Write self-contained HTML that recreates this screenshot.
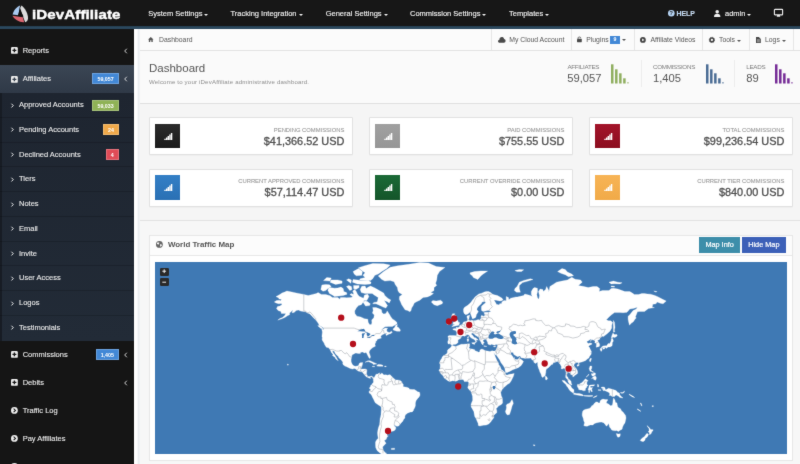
<!DOCTYPE html>
<html lang="en">
<head>
<meta charset="utf-8">
<title>iDevAffiliate - Dashboard</title>
<style>
*{box-sizing:border-box;margin:0;padding:0}
html,body{width:800px;height:464px;overflow:hidden;position:relative;background:#f6f6f6;font-family:"Liberation Sans",sans-serif;color:#555}
.abs,.abs *{position:absolute}
#wrap{position:absolute;left:-6px;top:-6px;width:812px;height:476px;overflow:hidden;will-change:transform;background:#f6f6f6;filter:url(#soft)}
#in{left:6px;top:6px;width:800px;height:464px}
#clip{position:absolute;left:0;top:0;width:800px;height:464px;overflow:hidden}
svg{overflow:visible}
/* top nav */
#top{left:-6px;top:-6px;width:812px;height:32px;background:#171717}
#topline{left:-6px;top:26px;width:812px;height:2.8px;background:linear-gradient(#20384a,#2d4b60 40%,#27445a 80%,#3a5468);z-index:5}
.nav{top:0;height:28px;line-height:28px;color:#f4f4f4;font-size:7.5px;white-space:nowrap;-webkit-text-stroke:0.12px #f4f4f4}
.caret{display:inline-block;position:relative!important;width:0;height:0;border-left:2.1px solid transparent;border-right:2.1px solid transparent;border-top:2.3px solid currentColor;margin-left:2px;vertical-align:-0.3px}
#brand{left:32px;top:0;height:26.5px;line-height:29.4px;font-weight:bold;font-size:13.4px;color:#fff;letter-spacing:0.1px;white-space:nowrap;-webkit-text-stroke:0.45px #fff;transform:scaleX(1.125);transform-origin:0 0}
/* sidebar */
#side{left:-6px;top:28px;width:140px;height:442px;background:#151515}
#sub{left:-6px;top:93px;width:140px;height:247.5px;background:linear-gradient(#1e2530,#222b37);border-left:8.5px solid #171c24}
.mi{left:0;width:134px;height:28px;line-height:28px;color:#ededed;font-size:7.5px;white-space:nowrap;-webkit-text-stroke:0.1px #ededed}
.mi .t{left:22.7px;top:0}
.mi .ic{left:10.6px;top:10.6px;width:6.8px;height:6.8px}
.mi .chev{left:124px;top:11px;width:3.4px;height:6px}
.si{left:0;width:134px;height:24.75px;line-height:24.5px;color:#ededed;font-size:7.5px;white-space:nowrap;-webkit-text-stroke:0.1px #ededed;border-bottom:1px solid rgba(0,0,0,.16)}
.si .t{left:19px;top:0}
.si .chev{left:10.6px;top:9.6px;width:2.8px;height:5.2px}
.badge{-webkit-text-stroke:0;height:11px;line-height:11px;color:#fff;font-size:5.3px;font-weight:bold;text-align:center;right:15.2px;top:8.3px;border:0.5px solid rgba(255,255,255,.22)}
.si .badge{top:6.5px}
/* content */
#edge{left:134px;top:28px;width:6px;height:442px;background:linear-gradient(90deg,#fff 0,#fff 50%,#eaedf1 75%,#f4f5f6 100%);z-index:3}
#crumb{left:136px;top:28px;width:670px;height:22.5px;background:#fbfbfb;border-bottom:1px solid #e2e2e2}
.cb{top:0;height:24px;line-height:24.4px;font-size:6.85px;color:#555;white-space:nowrap}
.sep{top:0;width:1px;height:22px;background:#e6e6e6}
.ci{top:0;left:0}
#head{left:136px;top:50.5px;width:670px;height:53px;background:#fafafa;border-bottom:1px solid #e0e0e0}
.sl{font-size:6.25px;line-height:8px;color:#7c7c7c;white-space:nowrap;top:12.7px;letter-spacing:-0.28px}
.sv{font-size:11.2px;line-height:14px;color:#555;white-space:nowrap;top:20.8px}
.bar{width:2.5px;bottom:19.6px}
.vsep{top:9px;width:1px;height:27px;background:#ededed}
#cards{left:136px;top:103.5px;width:670px;height:117.5px;background:#f5f5f5;border-bottom:1px solid #e2e2e2}
.card{width:204px;height:38px;background:#fff;border:1px solid #e1e1e1;border-radius:1px;box-shadow:0 0.5px 0.5px rgba(0,0,0,.05)}
.card .sq{left:5px;top:5.9px;width:25.3px;height:24.4px}
.card .sq svg{left:8.7px;top:8.9px}
.card .lb{right:7.7px;top:7.6px;font-size:5.85px;line-height:8px;color:#9a9a9a;white-space:nowrap;-webkit-text-stroke:0.1px #9a9a9a}
.card .vl{right:7.7px;top:15.6px;font-size:10.9px;line-height:14px;color:#4e4e4e;white-space:nowrap;-webkit-text-stroke:0.3px #4e4e4e}
#below{left:136px;top:221px;width:670px;height:249px;background:#f7f7f7}
#panel{left:149px;top:235px;width:644px;height:226px;background:#fff;border:1px solid #e7e7e7}
#ptitle{left:0;top:0;width:642px;height:19.5px;border-bottom:1px solid #e8e8e8;background:#fcfcfc}
#map{left:5px;top:25.5px;width:631.5px;height:192.5px;background:#3f79b4;overflow:hidden}
.btn{top:1px;height:16px;line-height:16.8px;color:#fff;font-size:7.3px;text-align:center;white-space:nowrap;-webkit-text-stroke:0.2px #fff}
.zb{left:5.2px;width:8.6px;height:8.2px;background:#2a2a2a;border-radius:1.3px}
.r2 .lb{top:7.4px}.r2 .vl{top:15.4px}
</style>
</head>
<body>
<svg width="0" height="0" style="position:absolute;left:0;top:0"><filter id="soft" x="0" y="0" width="100%" height="100%" color-interpolation-filters="sRGB"><feConvolveMatrix order="3" kernelMatrix="0.015 0.065 0.015 0.065 0.68 0.065 0.015 0.065 0.015" edgeMode="duplicate" preserveAlpha="true"/></filter></svg>
<div id="clip"><div id="wrap" class="abs"><div id="in">
  <div id="top"></div><div id="topline"></div>
  <svg style="left:11.5px;top:5px" width="17" height="18" viewBox="0 0 17 18">
    <path d="M8.2,0.6 C5,1.6 1.6,5.2 0.6,9.6 L6.6,10.2 L7.4,3.2 Z" fill="#a9c9f0"/>
    <path d="M9.4,0.6 C12.8,2.6 16.2,8.6 16,13.6 C15.8,15.6 14.6,17 13.2,17.2 L11,11.4 L8.2,3 Z" fill="#dcdcdc"/>
    <path d="M0.4,10.8 C2.4,14.6 7.6,17.6 12.2,17.2 L10.8,12.2 L5.4,11.6 Z" fill="#d9646f"/>
    <path d="M7.6,4.4 L11.6,11.6 L5.8,11 Z" fill="#0c0c0c"/>
  </svg>
  <div id="brand">iDevAffiliate</div>
  <div class="nav" style="left:148.2px">System Settings<span class="caret"></span></div>
  <div class="nav" style="left:230.5px">Tracking Integration<span class="caret"></span></div>
  <div class="nav" style="left:325.7px">General Settings<span class="caret"></span></div>
  <div class="nav" style="left:410px">Commission Settings<span class="caret"></span></div>
  <div class="nav" style="left:509px">Templates<span class="caret"></span></div>
  <svg style="left:668px;top:10px" width="6.6" height="6.6" viewBox="0 0 10 10"><circle cx="5" cy="5" r="5" fill="#b5d3f3"/><text x="5" y="8.1" font-size="8.4" font-weight="bold" text-anchor="middle" fill="#171717" font-family="Liberation Sans, sans-serif">?</text></svg>
  <div class="nav" style="left:676.5px;color:#b5d3f3;font-weight:bold;font-size:6.9px">HELP</div>
  <svg style="left:714.3px;top:9.6px" width="6.4" height="7" viewBox="0 0 10 11"><circle cx="5" cy="2.8" r="2.8" fill="#f0f0f0"/><path d="M0,11 C0,7.4 1.6,6 5,6 C8.4,6 10,7.4 10,11 Z" fill="#f0f0f0"/></svg>
  <div class="nav" style="left:725px">admin<span class="caret"></span></div>
  <svg style="left:774px;top:9.4px" width="9" height="8" viewBox="0 0 18 16"><rect x="0.8" y="0.8" width="16.4" height="11" rx="1.4" fill="none" stroke="#f0f0f0" stroke-width="2.2"/><path d="M6.4,12 L11.6,12 L12.6,15.6 L5.4,15.6 Z" fill="#f0f0f0"/></svg>

  <div id="side"></div>
  <div id="sub"></div>
  <div class="mi" style="top:36.75px"><svg class="ic" viewBox="0 0 14 14"><rect width="14" height="14" rx="2.4" fill="#ececec"/><path d="M5.6,3 h2.8 v2.6 h2.6 v2.8 h-2.6 v2.6 h-2.8 v-2.6 h-2.6 v-2.8 h2.6 Z" fill="#151515"/></svg><span class="t">Reports</span><svg class="chev" viewBox="0 0 6 10"><path d="M5,1 L1.2,5 L5,9" fill="none" stroke="#f0f0f0" stroke-width="1.5"/></svg></div>
  <div style="left:-6px;top:65px;width:140px;height:28px;background:linear-gradient(#3b4654,#2f3947)"></div>
  <div class="mi" style="top:65px;height:28px"><svg class="ic" viewBox="0 0 14 14"><rect width="14" height="14" rx="2.4" fill="#ececec"/><path d="M5.6,3 h2.8 v2.6 h2.6 v2.8 h-2.6 v2.6 h-2.8 v-2.6 h-2.6 v-2.8 h2.6 Z" fill="#343f4c"/></svg><span class="t">Affiliates</span><span class="badge" style="width:26.5px;background:#4288d6">59,057</span><svg class="chev" viewBox="0 0 6 10"><path d="M5,1 L1.2,5 L5,9" fill="none" stroke="#f0f0f0" stroke-width="1.5"/></svg></div>
  <div class="si" style="top:93.00px"><svg class="chev" viewBox="0 0 6 10"><path d="M1,1 L4.8,5 L1,9" fill="none" stroke="#ffffff" stroke-width="2"/></svg><span class="t">Approved Accounts</span><span class="badge" style="width:26.5px;background:#8fb256">59,033</span></div>
  <div class="si" style="top:117.75px"><svg class="chev" viewBox="0 0 6 10"><path d="M1,1 L4.8,5 L1,9" fill="none" stroke="#ffffff" stroke-width="2"/></svg><span class="t">Pending Accounts</span><span class="badge" style="width:15.5px;background:#f0a94a">24</span></div>
  <div class="si" style="top:142.50px"><svg class="chev" viewBox="0 0 6 10"><path d="M1,1 L4.8,5 L1,9" fill="none" stroke="#ffffff" stroke-width="2"/></svg><span class="t">Declined Accounts</span><span class="badge" style="width:13px;background:#df4b57">4</span></div>
  <div class="si" style="top:167.25px"><svg class="chev" viewBox="0 0 6 10"><path d="M1,1 L4.8,5 L1,9" fill="none" stroke="#ffffff" stroke-width="2"/></svg><span class="t">Tiers</span></div>
  <div class="si" style="top:192.00px"><svg class="chev" viewBox="0 0 6 10"><path d="M1,1 L4.8,5 L1,9" fill="none" stroke="#ffffff" stroke-width="2"/></svg><span class="t">Notes</span></div>
  <div class="si" style="top:216.75px"><svg class="chev" viewBox="0 0 6 10"><path d="M1,1 L4.8,5 L1,9" fill="none" stroke="#ffffff" stroke-width="2"/></svg><span class="t">Email</span></div>
  <div class="si" style="top:241.50px"><svg class="chev" viewBox="0 0 6 10"><path d="M1,1 L4.8,5 L1,9" fill="none" stroke="#ffffff" stroke-width="2"/></svg><span class="t">Invite</span></div>
  <div class="si" style="top:266.25px"><svg class="chev" viewBox="0 0 6 10"><path d="M1,1 L4.8,5 L1,9" fill="none" stroke="#ffffff" stroke-width="2"/></svg><span class="t">User Access</span></div>
  <div class="si" style="top:291.00px"><svg class="chev" viewBox="0 0 6 10"><path d="M1,1 L4.8,5 L1,9" fill="none" stroke="#ffffff" stroke-width="2"/></svg><span class="t">Logos</span></div>
  <div class="si" style="top:315.75px;border-bottom:0"><svg class="chev" viewBox="0 0 6 10"><path d="M1,1 L4.8,5 L1,9" fill="none" stroke="#ffffff" stroke-width="2"/></svg><span class="t">Testimonials</span></div>
  
  <div class="mi" style="top:340.5px"><svg class="ic" viewBox="0 0 14 14"><rect width="14" height="14" rx="2.4" fill="#ececec"/><path d="M5.6,3 h2.8 v2.6 h2.6 v2.8 h-2.6 v2.6 h-2.8 v-2.6 h-2.6 v-2.8 h2.6 Z" fill="#151515"/></svg><span class="t">Commissions</span><span class="badge" style="width:23px;background:#4288d6">1,405</span><svg class="chev" viewBox="0 0 6 10"><path d="M5,1 L1.2,5 L5,9" fill="none" stroke="#f0f0f0" stroke-width="1.5"/></svg></div>
  <div class="mi" style="top:368.5px"><svg class="ic" viewBox="0 0 14 14"><rect width="14" height="14" rx="2.4" fill="#ececec"/><path d="M5.6,3 h2.8 v2.6 h2.6 v2.8 h-2.6 v2.6 h-2.8 v-2.6 h-2.6 v-2.8 h2.6 Z" fill="#151515"/></svg><span class="t">Debits</span><svg class="chev" viewBox="0 0 6 10"><path d="M5,1 L1.2,5 L5,9" fill="none" stroke="#f0f0f0" stroke-width="1.5"/></svg></div>
  <div class="mi" style="top:396.5px"><svg class="ic" viewBox="0 0 14 14"><circle cx="7" cy="7" r="7" fill="#ececec"/><path d="M5.4,3.4 L9.2,7 L5.4,10.6" fill="none" stroke="#151515" stroke-width="2.2"/></svg><span class="t">Traffic Log</span></div>
  <div class="mi" style="top:424.5px"><svg class="ic" viewBox="0 0 14 14"><circle cx="7" cy="7" r="7" fill="#ececec"/><path d="M5.4,3.4 L9.2,7 L5.4,10.6" fill="none" stroke="#151515" stroke-width="2.2"/></svg><span class="t">Pay Affiliates</span></div>
  <div class="mi" style="top:452.5px"><svg class="ic" viewBox="0 0 14 14"><circle cx="7" cy="7" r="7" fill="#ececec"/><path d="M5.4,3.4 L9.2,7 L5.4,10.6" fill="none" stroke="#151515" stroke-width="2.2"/></svg></div>

  <div id="edge"></div>
  <div id="crumb">
    <svg class="ci" style="left:12.2px;top:9px" width="5.6" height="5" viewBox="0 0 11 10"><path d="M5.5,0 L11,5 L9.4,5 L9.4,10 L6.6,10 L6.6,6.4 L4.4,6.4 L4.4,10 L1.6,10 L1.6,5 L0,5 Z" fill="#555"/></svg>
    <span class="cb" style="left:23px">Dashboard</span>
    <span class="sep" style="left:355.2px"></span>
    <svg class="ci" style="left:361.5px;top:8.8px" width="7.6" height="5.8" viewBox="0 0 15 11"><path d="M3.4,11 C1.4,11 0,9.8 0,8 C0,6.4 1.2,5.2 2.8,5 C2.8,2.2 4.8,0 7.6,0 C9.8,0 11.4,1.4 12,3.6 C13.8,3.8 15,5.2 15,7.2 C15,9.4 13.6,11 11.6,11 Z" fill="#4a4a4a"/></svg>
    <span class="cb" style="left:373.2px">My Cloud Account</span>
    <span class="sep" style="left:434.7px"></span>
    <svg class="ci" style="left:441.2px;top:8.4px" width="4.8" height="6.2" viewBox="0 0 10 13"><rect x="0" y="6" width="10" height="7" rx="1" fill="#4a4a4a"/><path d="M2.2,6 V3.8 C2.2,1.6 7.8,1.6 7.8,3.8 V4.6" fill="none" stroke="#4a4a4a" stroke-width="1.8"/></svg>
    <span class="cb" style="left:450.2px">Plugins</span>
    <span class="cb" style="left:474px;top:8.4px;width:10px;height:7.6px;line-height:7.6px;background:#4288d6;color:#fff;font-size:5.2px;text-align:center;font-weight:bold">9</span>
    <span class="cb caret" style="position:absolute!important;left:486px;top:11.4px;height:0;margin:0"></span>
    <span class="sep" style="left:497.7px"></span>
    <svg class="ci" style="left:504px;top:9px" width="5.8" height="5.8" viewBox="0 0 12 12"><circle cx="6" cy="6" r="6" fill="#444"/><path d="M4.4,3 L9.2,6 L4.4,9 Z" fill="#fbfbfb"/></svg>
    <span class="cb" style="left:514.5px">Affiliate Videos</span>
    <span class="sep" style="left:566px"></span>
    <svg class="ci" style="left:572.6px;top:9px" width="5.8" height="5.8" viewBox="0 0 12 12"><circle cx="6" cy="6" r="3.9" fill="none" stroke="#444" stroke-width="3.2"/><circle cx="6" cy="6" r="5.4" fill="none" stroke="#444" stroke-width="1.6" stroke-dasharray="2.1 2.14"/></svg>
    <span class="cb" style="left:583px">Tools<span class="caret"></span></span>
    <span class="sep" style="left:613.2px"></span>
    <svg class="ci" style="left:619.6px;top:9px" width="4.8" height="6" viewBox="0 0 10 12"><path d="M0,0 H6 L10,4 V12 H0 Z" fill="#4a4a4a"/><path d="M2,5.4 H8 M2,7.6 H8 M2,9.8 H8" stroke="#fbfbfb" stroke-width="0.9"/></svg>
    <span class="cb" style="left:629px">Logs<span class="caret"></span></span>
    <span class="sep" style="left:656.5px"></span>
  </div>
  <div id="head">
    <div style="left:13px;top:9.5px;font-size:11.5px;line-height:16px;color:#555;white-space:nowrap">Dashboard</div>
    <div style="left:13px;top:27.6px;font-size:6.1px;line-height:8px;color:#8c8c8c;white-space:nowrap;letter-spacing:0.17px">Welcome to your iDevAffiliate administrative dashboard.</div>
    <div class="sl" style="left:431.4px">AFFILIATES</div>
    <div class="sv" style="left:431.2px">59,057</div>
    <svg style="left:475.1px;top:13px" width="20" height="20" viewBox="0 0 20 20"><rect x="0.00" y="0.3" width="2.5" height="19.2" fill="#8fae5f"/><rect x="4.05" y="5.3" width="2.5" height="14.2" fill="#8fae5f"/><rect x="8.10" y="9.3" width="2.5" height="10.2" fill="#8fae5f"/><rect x="12.15" y="14.3" width="2.5" height="5.2" fill="#8fae5f"/><rect x="16.20" y="18.1" width="1.5" height="1.4" fill="#8fae5f" fill-opacity=".75"/></svg>
    <svg style="left:569.7px;top:13px" width="20" height="20" viewBox="0 0 20 20"><rect x="0.00" y="0.3" width="2.5" height="19.2" fill="#4a6c94"/><rect x="4.05" y="5.3" width="2.5" height="14.2" fill="#4a6c94"/><rect x="8.10" y="9.3" width="2.5" height="10.2" fill="#4a6c94"/><rect x="12.15" y="14.3" width="2.5" height="5.2" fill="#4a6c94"/><rect x="16.20" y="18.1" width="1.5" height="1.4" fill="#4a6c94" fill-opacity=".75"/></svg>
    <svg style="left:638.5px;top:13px" width="20" height="20" viewBox="0 0 20 20"><rect x="0.00" y="0.3" width="2.5" height="19.2" fill="#752b96"/><rect x="4.05" y="5.3" width="2.5" height="14.2" fill="#752b96"/><rect x="8.10" y="9.3" width="2.5" height="10.2" fill="#752b96"/><rect x="12.15" y="14.3" width="2.5" height="5.2" fill="#752b96"/><rect x="16.20" y="18.1" width="1.5" height="1.4" fill="#752b96" fill-opacity=".75"/></svg>
    
    <div class="vsep" style="left:505.2px"></div>
    <div class="sl" style="left:517px">COMMISSIONS</div>
    <div class="sv" style="left:517px">1,405</div>
    <div class="vsep" style="left:598.4px"></div>
    <div class="sl" style="left:610.2px">LEADS</div>
    <div class="sv" style="left:610.2px">89</div>
  </div>
  <div id="cards">
    <div class="card" style="left:13.0px;top:13.6px"><div class="sq" style="background:linear-gradient(#2b2b2b,#1a1a1a)"><svg width="8.6" height="7" viewBox="0 0 16 14"><path d="M0,14 V11.4 H2.8 V14 Z M3.3,14 V8.8 H6.1 V14 Z M6.6,14 V6 H9.4 V14 Z M9.9,14 V3.2 H12.7 V14 Z M13.2,14 V0 H16 V14 Z" fill="#fff"/></svg></div><div class="lb">PENDING COMMISSIONS</div><div class="vl">$41,366.52 USD</div></div>
    <div class="card" style="left:233.0px;top:13.6px"><div class="sq" style="background:linear-gradient(#a0a0a0,#969696)"><svg width="8.6" height="7" viewBox="0 0 16 14"><path d="M0,14 V11.4 H2.8 V14 Z M3.3,14 V8.8 H6.1 V14 Z M6.6,14 V6 H9.4 V14 Z M9.9,14 V3.2 H12.7 V14 Z M13.2,14 V0 H16 V14 Z" fill="#fff"/></svg></div><div class="lb">PAID COMMISSIONS</div><div class="vl">$755.55 USD</div></div>
    <div class="card" style="left:453.0px;top:13.6px"><div class="sq" style="background:linear-gradient(#a3142a,#8c0d1f)"><svg width="8.6" height="7" viewBox="0 0 16 14"><path d="M0,14 V11.4 H2.8 V14 Z M3.3,14 V8.8 H6.1 V14 Z M6.6,14 V6 H9.4 V14 Z M9.9,14 V3.2 H12.7 V14 Z M13.2,14 V0 H16 V14 Z" fill="#fff"/></svg></div><div class="lb">TOTAL COMMISSIONS</div><div class="vl">$99,236.54 USD</div></div>
    <div class="card r2" style="left:13.0px;top:65.6px"><div class="sq" style="background:linear-gradient(#337fc6,#2a70b4);top:4.9px;height:25px"><svg width="8.6" height="7" viewBox="0 0 16 14"><path d="M0,14 V11.4 H2.8 V14 Z M3.3,14 V8.8 H6.1 V14 Z M6.6,14 V6 H9.4 V14 Z M9.9,14 V3.2 H12.7 V14 Z M13.2,14 V0 H16 V14 Z" fill="#fff"/></svg></div><div class="lb">CURRENT APPROVED COMMISSIONS</div><div class="vl">$57,114.47 USD</div></div>
    <div class="card r2" style="left:233.0px;top:65.6px"><div class="sq" style="background:linear-gradient(#1b6a36,#14552a);top:4.9px;height:25px"><svg width="8.6" height="7" viewBox="0 0 16 14"><path d="M0,14 V11.4 H2.8 V14 Z M3.3,14 V8.8 H6.1 V14 Z M6.6,14 V6 H9.4 V14 Z M9.9,14 V3.2 H12.7 V14 Z M13.2,14 V0 H16 V14 Z" fill="#fff"/></svg></div><div class="lb">CURRENT OVERRIDE COMMISSIONS</div><div class="vl">$0.00 USD</div></div>
    <div class="card r2" style="left:453.0px;top:65.6px"><div class="sq" style="background:linear-gradient(#f7b456,#f1aa48);top:4.9px;height:25px"><svg width="8.6" height="7" viewBox="0 0 16 14"><path d="M0,14 V11.4 H2.8 V14 Z M3.3,14 V8.8 H6.1 V14 Z M6.6,14 V6 H9.4 V14 Z M9.9,14 V3.2 H12.7 V14 Z M13.2,14 V0 H16 V14 Z" fill="#fff"/></svg></div><div class="lb">CURRENT TIER COMMISSIONS</div><div class="vl">$840.00 USD</div></div>
    
  </div>
  <div id="below"></div>
  <div id="panel">
    <div id="ptitle">
      <svg style="left:6.1px;top:5.4px" width="6.8" height="6.8" viewBox="0 0 14 14"><circle cx="7" cy="7" r="7" fill="#666"/><path d="M2.2,3.4 C4,2.6 5.6,3.6 6.6,3 C7.4,4.6 5.4,5.6 5.8,7 C4.6,7.6 3.4,6.6 2,6.4 Z M8.6,6.8 C10,6.2 11.8,7 12.4,8.2 C11.8,9.8 10.6,11.4 9,11.8 C8.8,10.2 7.8,8.4 8.6,6.8 Z" fill="#fcfcfc"/></svg>
      <div style="left:17.9px;top:-1px;line-height:19.4px;font-size:7.95px;font-weight:bold;color:#555;white-space:nowrap">World Traffic Map</div>
      <div class="btn" style="left:549.1px;width:41px;background:#3d8eaa">Map Info</div>
      <div class="btn" style="left:592.1px;width:43.5px;background:#3c60b8">Hide Map</div>
    </div>
    <div id="map"><svg width="631.5" height="192.5" viewBox="0 0 631.5 192.5" style="left:0;top:0"><path d="M131.9,29.0L136.8,30.0L141.2,31.0L148.8,32.4L153.2,33.5L155.4,33.0L157.6,32.4L161.4,31.6L163.1,30.6L166.3,32.4L170.7,32.4L175.1,33.7L177.3,35.6L182.7,35.6L184.9,37.3L185.5,35.4L189.3,35.4L191.5,35.8L195.9,35.6L197.5,34.9L198.6,31.6L197.7,29.0L199.7,27.6L201.3,29.6L202.4,32.0L204.1,34.3L206.8,35.4L208.5,36.2L209.5,33.0L212.8,32.2L213.9,34.5L212.8,36.8L211.7,38.6L209.0,38.4L207.9,40.4L206.3,42.7L203.5,43.6L201.3,46.1L199.7,48.9L199.9,51.5L201.9,54.2L205.7,54.9L209.5,56.7L212.8,57.2L213.2,60.3L214.5,62.4L216.1,62.7L216.9,61.1L216.7,58.1L218.8,55.8L219.3,53.0L217.4,51.1L218.2,48.6L217.7,45.6L221.0,45.6L223.8,46.6L226.5,47.8L226.9,50.6L228.7,52.0L230.9,51.4L232.2,48.9L234.2,51.9L235.8,54.7L237.4,56.9L239.8,58.4L241.8,60.3L242.0,61.8L240.5,62.7L237.4,64.4L233.1,64.4L230.0,64.8L228.1,66.2L226.0,68.6L227.6,67.5L230.3,66.1L232.6,66.2L231.6,67.9L232.4,69.9L234.7,70.5L236.3,69.3L237.4,70.1L236.1,71.4L233.6,72.3L231.4,73.5L230.7,72.6L232.2,71.2L229.8,71.6L227.8,72.6L226.3,73.5L225.6,75.0L226.5,75.9L224.9,76.4L222.3,77.3L222.0,78.6L220.7,79.4L220.8,80.5L219.9,82.0L220.4,84.2L218.8,85.0L217.1,86.0L215.6,87.6L214.4,88.9L214.1,90.6L214.9,92.8L215.5,94.7L215.1,96.3L214.2,96.2L213.4,94.7L212.5,93.0L211.6,91.0L210.7,90.6L209.4,90.9L207.7,90.1L205.7,90.3L205.3,91.6L203.3,91.5L200.8,91.0L199.2,91.7L197.0,93.1L196.5,95.4L196.1,97.7L196.2,100.0L197.4,102.6L198.8,103.8L200.2,104.3L202.4,103.9L203.7,103.2L204.2,101.5L205.2,100.8L207.7,100.6L207.5,102.3L207.0,104.1L206.5,105.1L205.8,106.9L207.4,107.0L209.0,106.9L211.0,107.0L212.0,107.9L211.7,110.1L211.5,111.8L212.2,113.5L213.4,114.6L215.0,114.6L216.3,114.0L218.1,114.9L219.0,115.7L220.3,113.7L220.6,112.8L221.2,112.3L222.7,112.0L224.3,111.0L225.1,110.9L224.4,112.0L225.0,112.6L226.3,111.8L226.6,111.0L228.1,112.0L228.6,112.9L230.9,112.8L232.5,113.2L234.2,112.7L235.2,112.8L236.3,114.0L237.4,115.1L239.1,116.8L240.7,117.9L242.9,118.0L245.1,118.4L246.5,119.6L247.3,121.2L248.4,122.7L248.0,124.4L250.0,125.1L251.7,125.2L253.8,126.1L254.6,127.3L257.1,127.5L259.3,127.5L261.0,128.5L262.6,129.7L264.5,130.2L265.0,132.3L264.8,133.8L263.9,135.2L262.5,136.7L261.0,138.7L260.4,141.0L260.4,143.8L259.6,146.0L258.8,147.3L258.2,148.9L257.1,149.9L255.5,150.0L254.2,150.4L252.4,151.2L250.6,152.7L249.9,154.1L249.9,156.1L248.6,157.5L247.8,159.2L246.1,160.9L244.7,162.7L244.0,163.7L242.9,164.2L241.6,164.2L240.2,163.6L239.2,163.1L239.2,164.0L240.5,164.8L240.9,166.1L240.1,168.1L238.5,169.0L236.3,169.4L235.0,169.2L234.9,171.4L233.9,172.1L232.0,171.8L232.0,173.5L233.4,173.9L232.5,174.6L231.6,175.9L231.3,177.3L229.3,178.6L230.2,180.0L231.1,181.2L229.2,183.2L227.6,184.9L228.1,187.5L228.4,188.6L230.3,190.7L231.7,191.3L229.5,192.6L226.5,192.0L224.3,190.4L222.1,188.6L220.7,185.6L220.5,182.8L220.5,180.0L221.6,177.9L223.2,176.2L222.7,173.3L222.5,170.7L223.0,167.5L223.5,165.6L224.6,162.5L224.9,159.5L225.0,157.1L225.6,154.7L226.0,152.4L226.1,150.6L226.3,147.7L226.2,144.9L225.1,143.9L223.8,143.2L222.1,142.1L220.5,141.0L219.6,139.6L218.7,137.6L217.7,135.7L216.7,133.4L215.7,131.9L214.2,131.0L214.1,129.4L215.2,128.2L215.7,127.3L214.5,126.8L214.7,125.5L215.6,124.3L215.6,123.5L216.7,122.8L217.2,121.7L218.3,120.6L218.5,119.5L218.3,118.4L218.4,117.0L217.9,116.6L217.2,115.3L216.1,114.7L215.1,115.5L215.6,116.4L213.9,116.0L212.3,115.3L211.5,115.0L210.1,113.5L209.2,112.5L207.9,110.7L207.1,109.9L205.2,109.6L203.0,109.0L201.9,108.1L200.2,106.7L199.2,106.6L197.5,107.1L195.3,106.5L193.7,105.7L191.7,104.7L189.9,104.1L188.2,102.8L187.7,101.7L187.9,100.6L187.1,99.1L185.5,97.3L183.8,95.7L183.3,94.5L182.2,93.6L181.1,92.4L180.0,90.9L179.5,89.4L177.6,88.6L177.6,90.0L179.5,92.4L180.6,94.2L181.7,95.9L182.4,97.5L183.3,98.6L182.4,98.3L180.6,96.8L180.2,95.4L178.4,94.2L177.3,93.2L178.2,92.4L176.7,91.0L175.6,88.8L175.0,87.6L173.6,85.8L171.3,85.2L169.7,82.7L169.1,81.0L167.7,78.9L167.1,77.7L167.3,75.6L166.9,74.3L167.4,70.0L166.7,66.9L169.1,67.5L168.5,66.1L166.9,64.7L164.2,63.2L163.1,61.1L160.9,58.1L159.2,56.6L157.0,54.2L154.9,51.9L152.7,51.1L150.5,49.8L148.3,49.4L145.6,49.1L143.4,48.1L141.2,48.6L139.0,50.6L137.0,50.7L137.9,47.8L136.3,49.4L134.6,51.1L134.6,52.7L132.4,53.8L130.2,55.3L127.5,56.6L125.3,57.3L122.8,58.1L124.8,56.6L127.5,55.5L129.7,53.4L130.8,51.5L129.2,51.4L126.4,51.5L125.9,49.4L123.1,48.6L121.5,46.5L122.6,44.4L124.8,44.1L127.0,42.7L126.4,41.5L123.7,41.8L121.0,40.9L119.3,39.9L121.5,38.6L124.2,38.2L125.9,38.8L126.4,37.3L124.2,36.9L123.1,35.4L121.0,34.7L122.6,33.7L124.8,32.6L127.0,31.0L129.7,30.0ZM223.2,14.0L228.7,9.6L235.2,5.3L242.9,3.7L253.8,2.3L264.8,0.4L273.5,1.0L281.2,4.5L289.9,5.5L284.5,9.6L282.3,13.3L281.7,17.9L280.6,21.3L281.7,23.4L279.0,25.6L279.0,28.6L275.7,30.6L278.5,31.4L275.7,33.5L272.4,34.9L268.1,35.4L264.8,38.2L262.0,39.5L259.3,40.9L258.2,43.6L256.6,46.1L256.0,48.6L254.9,49.8L252.7,48.6L250.0,47.8L248.4,45.3L246.7,42.7L245.6,40.0L244.3,37.3L244.5,34.5L247.3,32.6L244.0,30.6L242.9,28.6L242.4,25.6L240.2,22.4L239.1,19.7L235.2,18.6L229.8,19.1L226.5,17.3L224.9,15.6ZM215.6,24.1L219.9,26.0L224.3,28.6L228.7,31.0L229.8,33.5L233.1,36.4L235.8,37.9L234.2,40.9L232.0,39.5L229.2,38.6L232.5,43.6L230.9,46.1L228.1,45.1L224.9,43.4L221.0,41.8L217.7,41.8L218.8,40.4L222.1,40.0L222.7,38.2L223.2,35.4L219.9,33.5L217.2,31.6L213.4,31.6L210.1,31.6L206.3,30.6L205.2,27.6L206.8,24.3L210.1,24.1L211.2,26.6L213.4,25.1ZM172.9,28.6L174.5,31.6L177.3,33.0L179.5,34.5L183.8,34.1L188.2,33.5L192.0,32.2L191.5,30.6L188.8,29.6L188.2,26.6L186.0,25.1L182.7,26.0L179.5,26.2L175.1,25.6L173.5,26.6ZM165.8,27.6L168.0,29.2L170.7,28.6L172.9,26.6L176.2,24.5L174.5,22.8L170.7,22.4L166.9,23.0L166.3,25.6ZM204.6,17.9L215.6,18.6L217.7,16.8L219.9,13.3L223.2,12.1L227.6,8.9L232.0,6.3L235.2,3.1L228.7,1.8L217.7,1.5L209.0,3.9L203.5,5.8L206.8,8.4L210.1,10.8L207.9,13.3L210.1,15.6L205.2,16.8ZM198.1,9.6L203.5,6.6L207.4,9.6L206.8,13.3L201.3,13.8L199.2,12.1ZM197.5,20.2L202.4,21.9L210.1,22.4L215.6,21.9L216.1,20.2L213.4,18.6L205.7,18.6L202.4,17.9L198.1,17.5ZM207.9,40.0L210.6,44.1L214.5,43.6L215.3,41.8L212.3,39.5L210.1,39.1ZM175.1,20.2L180.6,22.4L187.1,21.3L187.1,19.1L182.7,17.9L176.2,17.9ZM191.5,24.5L194.8,28.6L197.0,27.6L196.4,24.5L193.7,23.4ZM198.6,23.4L198.6,26.6L200.8,27.6L204.1,25.6L204.1,23.4ZM194.8,32.6L197.5,34.5L198.6,32.6L196.4,31.6ZM191.5,17.9L195.9,21.3L196.4,17.9L193.7,16.8ZM168.5,18.6L175.1,19.1L176.2,16.1L171.8,15.6ZM238.2,67.9L241.8,69.2L245.1,69.3L245.4,68.1L244.5,66.8L243.5,65.4L242.0,64.7L242.4,62.5L240.7,63.2L239.6,65.4L238.2,66.8ZM162.7,63.7L165.8,66.4L168.1,66.9L166.6,65.0L164.2,63.5ZM210.1,100.2L212.8,98.8L215.0,98.7L218.8,100.4L221.9,102.0L218.3,102.4L217.7,101.5L215.0,100.2L213.4,99.6L211.2,100.1ZM221.7,104.0L224.3,104.3L228.1,104.2L227.6,103.1L224.9,102.4L222.8,102.5ZM217.4,104.2L219.6,104.3L219.6,104.8L217.4,104.7ZM229.6,104.0L231.2,104.1L231.2,104.7L229.6,104.7ZM276.3,40.0L279.0,42.7L282.3,43.7L287.2,41.8L287.7,40.0L285.6,38.2L281.2,39.1L277.9,38.6ZM236.3,186.4L239.6,186.2L239.6,187.4L236.3,187.4ZM297.2,83.2L296.2,82.7L295.0,81.8L293.2,82.0L292.7,79.9L293.4,78.0L293.5,76.7L292.9,74.3L294.3,73.4L296.8,73.5L298.9,73.6L301.1,73.8L301.7,72.2L301.7,70.3L300.7,68.6L298.1,67.8L297.8,66.9L299.8,66.4L301.3,66.7L301.0,65.1L301.7,65.5L303.3,65.4L304.7,64.5L304.8,63.4L306.7,62.7L307.8,61.5L308.3,60.3L309.6,59.7L310.7,59.6L312.1,59.1L312.6,58.1L312.5,56.6L311.9,55.0L312.0,54.1L314.7,53.1L314.3,55.0L314.0,56.6L313.8,57.6L314.2,58.2L315.1,58.8L316.7,58.2L318.4,58.8L320.6,58.4L323.3,57.6L324.4,58.2L324.9,57.5L326.0,56.6L326.0,54.5L326.7,53.3L328.2,54.2L329.6,53.9L329.8,52.2L328.8,50.7L330.4,50.3L333.7,50.3L336.1,49.4L334.2,48.6L332.6,48.6L330.4,49.1L328.2,49.6L326.6,48.6L326.4,47.0L326.4,44.4L327.7,43.0L330.4,40.9L330.7,40.0L329.3,39.5L327.1,40.0L326.3,41.8L323.8,44.1L322.2,46.1L321.9,47.8L323.3,49.4L322.8,50.6L321.3,52.7L321.1,54.2L320.6,55.5L318.7,56.6L317.3,56.7L317.0,55.5L316.2,53.4L315.3,51.1L314.7,50.3L312.9,51.9L310.7,52.7L309.1,51.4L308.5,49.4L308.5,47.0L309.6,45.3L312.4,43.6L314.5,41.8L316.2,40.0L317.3,38.2L318.9,36.4L320.0,34.9L322.2,33.2L323.8,32.0L326.6,31.2L329.3,30.0L331.3,29.4L333.7,29.6L336.4,31.0L337.0,32.0L339.2,32.8L342.4,33.5L346.8,36.0L348.1,37.7L346.8,38.8L344.6,38.9L341.3,38.2L339.2,37.9L338.6,37.3L340.8,40.9L341.3,42.2L344.1,42.9L344.6,41.8L346.8,41.6L346.8,40.0L349.0,38.6L351.2,38.8L351.2,36.4L351.2,34.5L353.4,35.4L353.9,37.7L355.6,36.2L361.0,34.9L362.1,35.1L365.4,34.3L368.7,33.5L369.8,32.0L373.6,33.0L375.3,33.5L377.4,34.5L376.3,32.6L376.3,29.6L378.0,26.6L379.6,25.6L382.4,26.2L382.6,29.6L381.8,32.6L382.4,35.4L383.5,37.3L381.8,38.8L384.0,36.4L384.5,33.5L383.5,29.6L385.1,27.0L387.8,27.6L388.4,29.6L390.6,27.6L391.7,24.5L393.8,28.6L393.8,30.6L394.9,24.5L398.2,22.4L401.5,20.2L407.0,19.1L412.4,17.9L416.8,15.2L420.1,17.3L425.6,17.9L427.2,20.2L423.4,23.4L426.1,24.1L427.8,24.3L433.2,25.6L438.1,24.5L442.0,24.5L444.7,26.6L444.2,29.6L447.4,28.6L450.7,28.6L454.0,28.6L456.2,26.6L458.4,26.2L462.8,27.0L467.1,28.6L469.9,29.6L474.8,29.6L478.1,31.6L479.2,32.6L483.5,32.6L486.8,31.6L489.5,31.6L492.3,32.0L495.6,32.2L499.9,33.5L503.2,34.9L507.6,37.3L511.2,39.1L508.1,41.8L505.4,41.3L502.1,40.0L501.0,41.8L497.8,42.2L497.2,45.3L499.4,45.6L493.4,46.6L489.5,49.4L484.6,49.4L482.4,49.8L481.3,52.7L480.3,55.0L481.3,55.8L480.0,57.3L478.1,60.0L476.4,61.1L474.5,63.2L473.7,60.3L473.1,57.3L473.1,54.2L474.8,52.7L478.1,48.6L481.3,47.0L482.4,45.3L478.1,46.6L474.8,47.0L472.0,50.3L468.2,50.7L464.9,50.6L459.5,50.6L456.2,53.0L454.0,55.0L451.3,57.8L453.5,58.8L455.6,58.8L457.6,60.3L456.7,63.2L456.7,66.1L455.1,68.9L452.4,71.6L448.5,74.6L447.3,74.2L446.0,75.2L444.9,76.3L444.7,77.3L442.5,78.5L443.4,80.0L444.6,82.0L444.6,83.9L444.2,84.4L442.5,84.9L441.2,85.2L441.4,83.3L441.5,81.4L439.8,80.8L440.1,78.9L439.0,78.2L436.5,77.6L435.6,79.6L436.0,77.4L435.4,77.2L433.8,78.5L432.1,79.2L431.8,80.1L433.2,81.4L435.1,81.0L437.0,81.5L436.8,82.3L434.6,83.3L433.5,84.5L434.5,85.5L435.4,87.6L436.3,89.2L436.5,90.6L435.2,90.3L436.3,91.2L436.0,92.6L434.6,94.2L433.9,95.9L432.3,97.1L430.7,98.5L428.3,99.4L426.7,100.0L424.5,100.6L423.7,101.9L423.2,100.6L421.5,100.4L419.8,101.5L418.8,103.1L419.5,104.8L421.4,106.8L422.5,109.0L422.7,111.3L420.6,112.9L419.9,113.1L419.5,114.0L417.8,115.0L417.9,113.5L417.1,112.9L415.7,112.4L415.2,111.0L413.5,110.4L413.3,109.6L412.4,109.8L412.3,111.3L411.7,112.9L411.7,114.2L412.8,115.1L413.3,116.8L414.6,117.7L416.0,119.2L416.3,121.2L417.0,122.9L416.3,123.0L414.1,121.5L413.0,119.5L412.8,117.9L412.1,117.1L410.8,115.7L410.6,114.0L410.9,112.4L411.0,110.1L410.3,108.5L409.9,106.6L408.6,106.2L407.3,107.0L406.2,106.8L406.4,104.5L405.3,102.5L404.0,101.1L403.5,99.6L402.0,99.4L400.4,100.2L398.2,100.8L397.7,102.3L396.3,102.8L394.9,104.2L393.1,105.9L391.4,107.0L390.8,109.0L390.9,110.1L390.5,111.8L390.3,113.1L389.5,114.2L388.6,114.8L387.8,115.6L386.7,114.6L386.0,112.0L384.9,110.1L384.3,108.1L383.5,106.2L382.7,103.4L382.6,101.1L382.4,100.0L380.7,101.4L379.1,100.6L378.5,99.6L379.6,99.1L378.0,98.3L376.9,97.7L376.3,96.8L375.8,96.1L373.6,96.3L370.9,96.3L370.3,96.4L368.1,96.1L366.0,95.7L365.4,94.2L364.3,94.1L362.7,94.7L360.5,93.6L358.8,92.4L358.1,90.6L356.7,90.3L356.1,90.6L355.6,91.2L356.3,92.8L357.8,94.5L358.3,95.9L359.4,95.4L359.5,96.9L360.5,97.5L362.7,97.5L364.3,95.9L364.6,95.0L364.9,96.8L367.0,98.0L368.5,99.4L367.3,101.7L366.2,103.4L364.9,104.5L363.2,105.7L360.3,106.8L357.2,108.1L355.0,109.3L352.3,110.4L350.6,110.5L350.1,108.5L349.8,106.2L348.5,104.0L345.9,100.6L344.6,97.7L343.0,95.4L341.3,93.0L341.3,91.2L340.6,93.2L338.6,90.6L338.4,89.1L340.3,89.1L341.1,87.6L341.9,85.8L342.4,83.9L342.7,82.4L340.8,82.4L339.2,83.2L338.1,82.7L336.5,82.3L335.3,83.0L333.7,82.4L332.9,82.0L332.6,80.1L331.8,78.9L331.7,78.2L331.5,77.3L329.3,77.2L328.8,78.2L328.0,77.6L328.0,79.1L329.3,80.8L328.2,81.4L328.2,82.7L327.1,82.4L326.4,81.2L326.0,80.1L324.9,78.6L324.3,76.9L324.4,75.9L323.3,75.0L321.7,74.0L320.0,73.0L318.9,71.4L317.9,71.6L318.0,70.7L316.5,71.2L316.6,72.7L317.9,73.6L319.1,75.4L320.6,75.7L322.8,77.4L323.3,78.2L321.7,77.7L321.2,78.9L321.8,79.5L321.1,80.4L320.2,80.8L320.6,79.5L320.0,78.2L318.7,77.2L316.7,76.3L315.1,75.0L314.3,73.6L312.9,72.4L311.3,73.2L309.6,74.2L308.5,73.9L306.9,73.9L306.3,75.0L305.5,76.4L303.6,77.6L302.7,78.9L303.3,79.9L302.3,81.3L300.9,82.3L298.2,82.4ZM296.6,83.5L297.3,83.4L299.8,84.2L300.9,84.4L303.1,83.5L306.3,82.3L308.5,82.3L311.3,82.0L313.8,81.7L315.1,82.0L314.3,82.7L314.8,83.9L314.0,85.4L314.1,85.9L315.1,86.8L317.5,87.1L319.7,87.7L320.0,88.8L322.2,89.5L323.8,90.3L324.9,89.4L324.9,88.1L326.8,87.1L328.2,87.5L330.4,88.7L332.6,89.1L334.8,89.5L335.9,89.2L337.0,88.8L338.4,89.1L338.6,90.6L339.7,93.0L340.3,94.8L341.3,97.1L342.1,98.8L343.5,101.1L343.8,102.7L345.2,104.5L346.3,107.4L347.9,108.5L349.5,110.1L350.4,110.7L350.3,111.8L351.2,112.9L352.3,113.0L354.5,112.3L356.7,112.0L359.2,111.5L358.8,113.0L358.3,114.6L357.2,116.8L356.1,119.0L354.5,121.2L352.6,122.3L350.6,123.9L349.0,125.5L347.9,126.6L347.0,127.7L346.5,128.8L345.7,130.5L346.0,131.9L346.3,133.8L347.3,136.0L347.5,138.2L347.6,141.0L346.3,142.6L343.5,144.1L341.9,146.0L341.1,146.4L341.7,148.3L341.9,150.6L339.2,152.9L338.7,153.5L338.9,155.3L338.1,156.8L337.0,158.1L335.9,159.8L333.7,161.9L331.2,163.1L328.2,163.2L324.9,164.1L323.3,163.5L323.1,161.3L322.0,158.9L321.1,156.6L319.8,154.7L319.3,152.4L318.9,149.7L317.8,147.7L316.2,144.9L316.0,142.6L316.5,141.0L317.7,138.2L317.5,134.3L316.5,131.0L316.0,129.6L315.1,128.5L313.5,127.0L312.7,125.3L313.3,123.9L313.7,122.3L313.7,120.6L312.9,119.5L312.4,119.5L310.7,119.6L309.6,119.7L308.5,118.1L308.0,117.5L306.8,117.4L304.7,117.7L303.1,118.1L302.8,118.4L300.9,119.2L299.2,118.9L297.6,118.7L294.9,119.6L293.2,119.0L291.2,117.5L289.4,116.2L288.6,115.1L288.3,114.0L286.7,112.6L285.6,111.3L284.8,109.6L283.9,108.2L285.0,106.8L285.2,104.5L285.3,102.8L284.5,101.1L285.0,99.4L285.6,98.0L286.7,96.5L287.2,95.1L288.6,93.4L289.9,93.0L291.9,91.5L292.5,90.0L292.3,88.8L293.0,87.6L294.7,86.3L295.6,85.6L296.5,84.3ZM357.0,137.6L358.0,139.9L358.3,141.5L357.2,143.8L356.7,145.5L356.1,147.7L355.2,150.6L354.5,152.4L352.5,152.9L351.2,151.8L350.4,149.5L351.2,147.2L351.5,145.5L351.2,143.2L352.3,142.1L353.9,141.5L355.3,140.4L355.9,139.3ZM458.9,136.2L460.0,138.2L460.3,140.2L462.0,141.0L462.2,142.6L462.8,144.9L463.8,145.8L465.5,146.8L466.6,148.9L468.0,150.0L469.3,151.8L470.6,153.5L471.0,155.9L470.4,158.9L469.9,161.0L468.5,163.0L467.5,165.2L467.1,167.2L465.5,168.0L463.3,169.4L461.7,168.5L460.6,168.7L458.4,168.6L456.7,168.1L455.6,166.2L454.5,165.0L454.0,162.5L453.8,161.6L451.8,164.1L451.3,164.1L449.8,161.9L448.5,160.7L446.3,160.1L444.2,160.2L440.9,161.0L438.7,161.9L438.1,163.0L435.4,162.9L433.8,163.5L432.1,164.3L429.9,164.1L428.8,163.5L429.6,160.7L428.8,158.9L428.3,156.5L427.2,153.5L427.2,151.8L427.8,148.9L428.0,148.7L429.9,147.5L432.1,146.9L434.3,146.4L436.0,145.2L436.7,143.8L438.1,143.2L439.2,141.5L440.9,139.9L442.5,139.9L443.6,141.0L444.7,141.0L445.3,138.7L446.3,137.8L448.0,137.1L450.2,137.6L452.4,137.6L452.9,138.0L451.8,139.3L451.3,141.0L453.5,142.1L455.6,143.8L457.3,143.2L457.8,141.0L458.0,138.7L458.4,136.5ZM461.3,171.6L463.3,172.1L465.3,171.8L465.2,173.5L464.4,175.0L462.8,175.2L462.0,173.9ZM492.0,163.6L493.7,165.0L495.0,166.5L495.6,167.6L498.1,167.7L497.8,169.0L496.7,169.8L496.4,171.3L494.8,172.7L494.3,172.3L494.5,170.7L493.2,169.8L494.1,168.7L494.1,166.8L492.8,165.0ZM492.0,171.3L493.6,172.6L492.8,173.9L492.1,175.2L490.4,176.3L489.9,178.3L488.5,179.4L487.1,179.4L485.2,178.6L486.3,176.9L487.4,175.9L489.5,174.6L490.6,172.9ZM446.3,125.3L448.0,124.9L449.6,125.3L450.7,128.1L453.5,126.3L457.3,127.3L461.1,128.6L462.8,130.5L464.4,131.0L464.7,132.7L466.0,134.3L468.0,136.0L464.9,135.5L463.3,134.1L461.1,132.9L460.0,133.8L459.5,134.5L457.3,134.4L455.1,133.2L454.0,133.5L454.9,132.1L454.0,130.5L451.8,129.4L449.6,128.6L448.5,128.8L447.4,127.5L449.1,127.0L447.4,126.6L446.3,125.9ZM465.3,130.6L467.7,130.5L469.5,129.0L469.3,130.2L468.0,131.2L466.0,131.2ZM422.3,122.8L422.8,122.3L424.5,122.7L424.8,121.7L426.7,120.8L428.3,119.3L429.9,117.3L431.0,116.8L431.8,117.9L433.2,118.6L432.1,119.7L431.8,121.2L432.1,122.8L433.2,123.3L431.8,124.4L431.6,125.5L430.5,126.6L430.3,128.6L428.5,128.8L426.7,128.1L425.2,127.9L423.7,127.5L423.4,126.1L422.5,125.0L422.3,123.6ZM407.3,118.3L409.7,118.7L411.0,120.3L412.9,121.9L414.3,122.5L415.7,123.7L416.5,125.5L417.4,126.4L419.0,127.7L418.8,130.8L417.5,130.8L416.3,129.7L415.0,128.7L413.9,127.2L412.9,125.5L411.6,124.1L411.0,122.6L409.7,121.5L408.4,120.2L407.4,119.0ZM418.2,131.9L419.2,131.0L421.7,131.6L424.1,131.6L426.3,132.1L428.2,133.0L428.2,133.9L425.0,133.5L422.0,133.0L419.5,132.5ZM428.8,133.4L431.0,133.5L433.2,133.6L435.4,133.6L437.6,133.5L437.6,134.2L434.3,134.5L431.0,134.3L428.8,134.1ZM438.1,135.7L439.8,134.3L442.2,133.6L441.4,134.6L439.2,135.6ZM434.1,123.6L435.4,123.1L439.8,122.8L438.7,124.1L435.2,124.0L435.6,125.8L437.6,125.5L436.7,127.2L437.4,129.4L436.3,129.7L435.4,127.7L434.6,127.9L434.6,130.5L433.8,130.5L433.7,128.3L433.0,127.4L434.0,125.0ZM442.5,122.3L443.6,122.8L443.6,125.0L442.7,125.0L442.5,123.3ZM443.1,127.7L445.8,127.7L445.8,128.4L443.1,128.3ZM435.0,104.0L436.7,104.0L436.8,106.2L436.0,107.4L436.5,108.8L438.7,110.1L438.1,110.5L436.5,109.4L435.1,109.3L434.6,107.9L434.2,106.5L434.8,105.1ZM436.5,111.5L437.8,111.8L439.2,110.7L440.5,111.3L440.3,112.9L439.2,113.5L438.1,114.2L437.0,113.7L436.5,112.7ZM431.3,115.2L433.8,112.9L433.8,112.0L432.7,113.5L431.3,114.8ZM436.5,116.8L438.1,115.0L440.3,113.7L441.4,115.7L441.1,117.5L440.3,118.2L438.7,117.5L438.1,116.0ZM435.4,96.3L436.5,96.5L436.0,98.3L435.2,100.0L434.5,98.8L434.6,97.7ZM422.0,103.1L423.4,102.2L424.5,102.7L423.4,104.1L422.3,104.2ZM457.7,76.4L458.4,78.9L457.3,80.8L457.3,82.3L457.1,83.7L456.0,84.5L454.9,84.9L452.9,85.0L452.7,85.3L451.6,86.4L450.7,85.4L449.1,85.3L447.8,85.8L446.3,85.8L446.3,85.3L448.0,84.0L450.2,83.8L451.8,83.7L452.6,82.3L453.2,81.4L454.5,81.7L455.6,80.1L456.2,78.5L456.2,77.3L456.5,76.7ZM456.2,76.3L456.5,75.2L456.7,73.9L457.9,71.1L459.5,72.6L462.0,72.6L462.2,73.9L459.8,75.6L457.8,75.0L457.3,75.9ZM445.3,86.4L446.3,86.0L447.2,87.0L446.8,88.8L446.0,89.4L445.5,88.2L444.9,87.0ZM448.0,86.0L450.2,85.5L449.8,86.6L448.5,87.2L447.8,86.8ZM458.4,58.4L459.5,60.3L459.8,63.2L460.0,65.4L459.3,68.2L460.0,69.6L458.4,70.3L458.4,67.5L458.4,64.7L458.2,61.8L458.4,59.6ZM390.5,113.8L391.9,115.1L392.6,116.8L391.7,117.8L390.8,117.9L390.3,116.2ZM296.8,64.7L299.2,64.2L301.4,63.7L304.5,63.0L303.8,62.5L304.9,60.8L303.4,60.3L302.8,58.5L301.4,57.3L300.9,55.8L299.8,55.8L300.9,53.4L299.2,53.1L299.8,51.7L297.6,51.7L296.8,53.4L296.5,55.0L297.0,56.6L297.8,57.6L299.6,57.5L299.8,59.6L298.1,59.9L298.5,61.1L297.4,62.1L299.2,62.5L299.8,63.0L298.1,63.2ZM292.1,62.4L293.8,62.2L296.2,61.5L296.5,59.9L297.0,58.1L296.0,57.0L294.1,57.0L292.1,58.5L292.7,60.0L291.8,61.5ZM315.1,10.8L319.5,9.6L326.0,8.9L332.6,9.1L328.2,12.1L326.0,13.8L322.8,17.5L318.4,15.6L317.3,13.8L315.1,12.1ZM359.4,28.6L361.6,30.2L365.4,30.2L364.3,26.6L364.3,23.4L367.6,20.6L373.1,19.1L378.0,17.5L375.3,16.8L368.7,18.4L364.3,20.2L362.1,24.5L359.9,26.6ZM402.6,9.6L407.0,6.6L410.3,7.6L412.4,10.1L416.8,12.1L418.5,13.8L413.5,14.7L410.3,12.8L405.9,11.3ZM454.0,20.2L458.4,19.1L462.8,20.2L467.1,20.8L464.9,21.9L459.5,21.7L456.2,21.9ZM456.2,23.9L459.5,24.3L459.5,25.1L456.2,24.9ZM498.8,29.0L502.1,29.6L500.5,30.0ZM359.9,8.6L364.3,7.6L368.7,7.8L366.5,9.4L362.1,9.6ZM316.7,80.8L320.1,80.4L319.6,82.4L317.3,81.7ZM312.0,76.9L313.7,76.9L313.6,79.2L312.4,79.5ZM312.5,75.0L313.5,74.3L313.3,76.3L312.7,76.3ZM328.8,83.8L331.8,84.2L331.5,84.5L328.9,84.3ZM338.4,84.5L340.8,83.8L340.3,84.7L338.9,85.0ZM482.4,146.8L485.7,148.9L485.5,149.4L482.4,147.4ZM497.0,143.8L498.4,143.7L498.4,144.6L497.0,144.6ZM474.2,132.1L478.1,134.3L479.7,135.6L477.5,134.9L474.2,132.7ZM485.3,141.0L486.0,141.0L487.1,143.8L486.4,143.8ZM132.4,102.0L133.5,102.5L133.0,103.4L132.4,102.8ZM378.3,182.8L380.2,183.1L379.6,183.8L378.5,183.6Z" fill="#fff" stroke="#fff" stroke-width="0.3" stroke-linejoin="round"/><path d="M148.8,32.4L148.8,48.9L151.0,49.4L152.7,51.1L154.9,49.9L157.0,51.9L159.2,55.0L160.9,56.6L160.7,57.8M168.5,66.1L199.2,66.1L199.7,66.4L203.0,67.5L205.2,67.5L206.3,67.1L210.6,69.6L211.7,70.3L212.8,71.2L212.8,74.3L212.3,75.6L216.7,74.6L216.7,73.6L219.4,73.0L221.0,71.6L224.9,71.6L226.0,70.5L227.4,68.3L228.7,68.5L228.9,70.5L229.8,71.6M175.0,87.6L177.6,87.4L181.7,89.1L184.7,89.1L184.7,88.5L186.6,88.5L188.8,91.0L190.4,91.8L191.0,90.9L192.0,90.9L193.7,93.0L194.2,94.2L196.5,95.4M202.2,108.4L202.4,107.4L203.0,106.8L204.1,106.8L203.5,105.4L203.5,104.8L205.5,104.8L205.5,106.8L206.5,107.1M205.5,104.8L206.5,104.1M204.5,109.3L205.4,108.6L206.3,109.0L207.1,109.8M205.4,108.6L205.5,107.7M207.6,110.1L209.0,109.0L210.3,108.1L212.1,107.9M209.3,112.3L211.5,112.5M212.4,115.6L212.7,114.0M218.4,115.0L217.9,116.6M225.1,111.3L223.8,112.4L223.2,114.6L224.0,116.2L226.5,116.8L229.2,117.7L228.9,120.1L229.8,122.3L229.9,123.1M229.9,123.1L227.0,122.6L226.5,124.4L227.0,125.5L226.5,129.0M216.7,122.8L218.3,123.9L220.7,124.6L222.7,126.6L226.5,127.4L226.5,129.0M215.2,128.2L215.6,129.4L217.2,129.7L218.3,127.7L220.5,126.1L220.7,124.6M226.5,129.0L223.2,129.9L222.1,132.7L223.4,134.9L226.0,134.9L225.8,136.5L227.0,136.5M227.0,136.5L227.8,138.2L227.6,141.0L227.0,143.5M226.2,144.7L227.0,143.5M227.0,136.5L231.6,135.4L232.0,137.6L235.2,139.3L237.1,139.9L237.4,142.4L239.3,142.4L239.6,143.8L240.2,144.3L239.6,146.4M227.0,143.5L228.1,145.5L228.1,147.7L229.6,149.8M229.6,149.8L230.9,148.7L232.5,149.1L234.5,149.1M234.5,149.1L235.5,146.3L238.5,145.8L239.6,146.4M239.6,146.4L239.6,148.9L242.1,149.4L243.7,151.2L243.3,153.1M234.5,149.1L237.4,151.2L240.0,152.7L239.0,154.9L241.8,155.1L243.3,153.1M243.3,153.1L244.2,154.9L242.0,156.2L240.1,158.5M240.1,158.5L239.4,161.3L239.2,163.1M240.1,158.5L242.4,159.3L244.5,161.3L244.7,162.7M229.6,149.8L228.1,151.8L228.4,154.7L226.7,158.3L226.0,161.9L226.5,164.3L225.4,168.1L224.6,172.0L224.5,175.9L224.9,179.3L223.8,182.8L223.2,184.9L224.3,187.1L228.1,187.5M228.0,188.1L228.0,191.4M229.9,123.1L232.0,123.3L233.1,122.3L233.1,120.1L236.3,119.5L236.7,118.7M236.7,118.7L236.0,117.9L237.4,115.3M236.7,118.7L237.4,119.0L237.7,121.7L238.7,123.0L240.7,122.4L241.3,122.3M240.5,117.9L239.6,120.1L241.3,122.3M241.3,122.3L244.0,121.9L245.6,121.9L246.5,120.1M244.0,118.1L243.6,120.6L244.0,121.9M300.7,84.4L301.2,87.0L299.2,88.6L297.0,90.6L293.5,92.2L293.5,93.8M288.6,93.4L293.5,93.4M293.5,93.8L293.5,95.4L289.9,95.4L289.9,98.3L288.8,98.8L288.8,100.8L284.5,100.8M293.5,93.8L297.8,96.5L304.2,101.1L306.3,102.8L306.7,103.4L307.7,103.2M297.8,96.5L296.0,96.5L297.0,106.2L297.3,107.4L292.7,107.5L290.5,107.4L289.7,108.2M285.0,106.8L287.2,106.1L288.8,107.4L289.7,108.2M289.7,108.2L290.6,110.8M284.8,110.9L288.1,110.6L290.6,110.8M284.7,109.5L287.7,109.5M286.7,112.4L288.1,111.6L288.1,110.6M290.6,110.8L293.2,110.9L294.3,113.2M288.5,114.6L291.0,113.5L291.8,115.1L292.9,116.2L294.0,116.1L294.3,113.2M290.5,116.9L291.8,115.1M294.9,119.6L294.0,117.3L294.0,116.1M294.3,113.2L296.5,112.9L297.0,113.0L300.0,113.8M300.0,113.8L300.1,116.2L299.7,118.9M297.0,113.0L298.4,110.5L300.9,108.8L303.3,107.9M303.3,107.9L306.9,107.5L307.7,105.9L307.7,103.2M300.0,113.8L300.0,112.4L303.1,112.3L304.2,112.4M303.3,107.9L304.0,109.6L305.5,110.8M304.2,112.4L305.5,110.8M304.4,117.8L303.7,115.7L303.1,112.3M304.8,117.7L304.8,114.6L304.2,112.4M306.0,117.4L306.1,114.6L307.0,111.6M305.5,110.8L307.0,111.6M307.0,111.6L307.5,109.6L310.7,110.1L312.9,110.4L316.2,109.9L317.9,109.4M307.7,103.2L309.4,102.8L311.3,101.4L316.2,98.3M316.2,98.3L318.6,99.3L319.5,98.8M319.5,98.8L320.0,101.1L320.0,105.9L317.9,109.4M312.5,82.2L312.1,85.2L311.3,86.0L312.9,88.2L313.5,90.3M315.6,86.8L314.3,88.6L313.5,90.3M313.5,90.3L313.9,94.8L314.0,97.1L316.2,98.3M330.4,88.7L330.4,100.0M319.5,98.8L329.3,102.8M329.3,102.8L329.3,102.3L330.4,102.3L330.4,100.0M330.4,100.0L343.4,100.0M329.3,102.8L329.3,107.1L327.7,109.0L327.1,110.6L328.1,112.4M317.9,109.4L318.6,110.4L319.5,111.1L319.5,113.5L318.4,113.5L320.0,116.2M320.0,116.2L323.3,115.7L326.0,114.0L328.1,112.4M312.5,119.3L313.5,117.3L315.6,117.1L317.3,114.0L318.6,110.9M320.0,116.2L318.9,118.4L320.6,122.0M313.8,121.9L317.6,122.0L320.6,122.0M313.6,123.3L315.4,123.3L315.4,122.0M315.2,128.7L316.2,127.0L318.9,126.6L318.4,125.0L318.8,123.0L317.6,122.0M320.6,122.0L323.4,120.6L322.8,124.4L320.8,126.6L320.6,128.8L317.3,129.6L316.4,130.8M323.4,120.6L324.4,119.0L328.2,119.3L330.7,118.9L333.0,119.0M328.1,112.4L329.3,114.9L333.0,119.0M329.3,114.9L331.5,113.5L334.8,113.8L338.1,111.3L339.2,113.5L340.3,114.0M345.3,104.5L343.5,105.7L343.0,107.9L343.0,110.5L341.3,112.4L340.3,114.0M340.3,114.0L339.2,115.7L341.0,117.1L342.3,119.4M342.3,119.4L340.3,119.8L337.0,120.4L333.0,119.0M343.0,108.7L345.7,108.4L349.4,110.7M349.4,110.7L348.8,112.4L350.1,112.4L349.9,112.7L350.1,114.2L352.3,115.1L355.6,115.7L352.3,119.0L349.0,120.0M350.1,112.4L350.4,111.8M349.0,120.0L346.3,120.6L344.6,120.5L342.4,119.6M349.0,120.0L347.9,121.4L347.9,125.5L348.5,126.3M340.3,119.8L341.3,122.6L340.3,124.4L340.3,125.5M340.3,125.5L344.3,127.8L345.9,129.6M337.0,120.4L335.9,123.3L335.4,126.0M336.4,125.5L340.3,125.5M335.4,126.0L334.8,127.4L335.1,129.3L336.4,129.1L336.8,127.1L336.4,125.5L335.4,126.0M334.8,127.4L336.8,127.1M335.1,129.3L335.3,131.6L336.6,133.5M336.6,133.5L339.0,134.8L340.3,134.9L341.2,137.1L344.1,137.3L347.3,136.0M316.4,130.8L317.3,130.9L321.1,130.9L321.7,132.7L324.4,133.0L325.5,132.1L326.9,132.4L327.1,136.5L329.3,136.5M329.3,136.5L330.7,137.3L333.1,138.0L334.8,139.2L335.7,137.8L334.1,137.4L334.3,134.5L336.6,133.5M329.3,136.5L329.3,138.7L327.1,138.7L327.1,142.1L328.7,143.9M316.0,143.5L318.4,143.7L323.3,143.7L328.7,143.9M328.7,143.9L326.0,144.7L326.0,148.9L324.9,148.9L324.9,152.1M324.9,152.1L324.9,156.5L321.7,155.9L321.1,156.6M324.9,152.1L326.0,154.6L328.2,152.7L331.0,153.2L332.6,150.7L335.2,149.1M335.2,149.1L333.1,147.2L330.7,144.1M328.7,143.9L330.7,144.1M330.7,144.1L332.6,144.3L334.7,142.0L336.3,141.6M336.3,141.6L339.2,139.9L339.4,138.2L339.5,136.3L339.0,134.8M336.3,141.6L339.0,142.9L338.9,146.0L338.5,148.1L337.3,149.4M335.2,149.1L337.3,149.4M337.3,149.4L338.1,151.8L338.1,154.5L339.0,154.6M341.2,137.1L340.9,139.3L342.2,140.5L341.7,143.2L340.6,142.1L340.8,140.4L339.2,139.9M332.9,157.8L334.0,156.7L335.2,157.7L334.3,158.9L332.9,157.8M337.0,153.5L338.1,153.5L338.1,154.9L337.0,154.9L337.0,153.5M340.5,89.1L341.2,91.2M293.4,75.7L296.0,75.7L295.5,77.8L294.9,78.7L295.4,80.5L295.0,81.8M301.1,73.8L303.8,74.7L306.6,75.1M305.8,63.1L307.7,64.7L309.4,65.4L312.0,66.1M312.0,66.1L311.4,68.1L309.6,70.0L310.7,70.4L310.5,71.6L311.3,73.2M306.8,62.7L308.5,62.7L309.6,63.5M309.6,63.5L309.6,61.9L310.7,61.3L310.9,59.9M309.6,63.5L309.8,64.5L309.4,65.4M312.5,57.5L313.9,57.6M318.6,59.0L319.0,61.1L319.5,63.2M319.5,63.2L316.5,64.2L318.2,66.4M318.2,66.4L317.3,68.2L314.5,68.2L313.6,68.2L311.4,68.1M310.7,70.4L312.9,70.3L314.5,69.4L313.6,68.2M314.5,69.2L316.5,69.2L318.0,69.6M318.0,69.6L320.6,69.3L321.7,67.5M318.2,66.4L319.5,66.1L321.7,66.7L321.7,67.5M319.5,63.2L321.1,64.2L323.6,65.4L327.8,66.0M327.8,66.0L329.3,63.5L328.9,61.1L329.2,58.8L328.0,58.2L324.6,58.2M321.7,66.7L323.6,65.4M321.7,67.5L323.6,67.8L325.5,66.8L327.3,66.9L327.8,66.0M327.3,66.9L326.0,70.0L325.2,70.1L323.7,70.4L320.6,69.3M327.3,66.9L330.4,67.8L332.2,67.1L333.9,69.6L333.9,71.1L335.5,71.2M332.2,67.1L334.8,67.5L335.9,69.6L333.9,71.1M327.9,72.7L330.4,73.4L332.6,72.8L334.3,73.4M325.2,70.1L326.5,71.9L327.9,72.7M328.1,76.5L329.9,76.3L331.8,76.0L333.7,75.6M327.9,72.7L327.6,74.6L328.1,76.5M331.8,76.0L331.5,77.2M324.9,78.6L326.0,77.2L328.1,76.5M323.7,70.4L324.3,71.8L324.1,73.6L325.3,74.6L325.6,75.7L326.0,77.2M324.3,75.7L325.6,75.7M325.3,74.6L327.6,75.2M320.3,71.4L321.7,71.4L323.7,71.6L324.1,73.6L323.3,75.0M317.9,70.9L319.8,70.9L321.1,69.7M315.3,51.1L316.5,47.8L316.4,44.4L318.4,41.8L319.5,38.8L321.1,35.4L324.9,33.5M324.9,33.5L326.0,33.2L331.2,33.0L332.6,31.6L334.8,32.2L336.8,32.2M325.5,33.5L328.9,35.6L329.3,39.5M334.8,32.2L334.2,34.5L335.9,36.4L334.8,37.7L335.9,40.0L335.9,43.0L337.5,44.6L333.5,48.6M333.7,50.3L333.1,53.0M329.6,52.8L333.1,53.0M333.1,53.0L333.9,55.5M326.0,55.6L330.4,55.3L332.2,56.2L333.9,55.5M332.2,56.2L331.2,58.4L329.2,58.8M326.3,56.9L328.0,57.3L328.0,58.2M333.9,55.5L336.8,56.4L338.8,59.6L337.5,61.6M328.9,62.4L332.6,62.4L336.4,62.8L337.5,61.6M337.5,61.6L340.3,61.3L341.9,64.1L344.6,64.7L346.8,65.2L346.6,67.6L344.8,68.8M346.8,73.8L350.1,74.7L353.9,75.9L356.1,75.9M348.5,76.3L350.6,76.8L352.3,76.5L353.9,75.9M350.6,76.8L352.1,78.6L351.4,80.8L352.1,81.8M352.3,76.5L353.9,78.9L352.1,78.6M352.1,78.6L353.9,79.6L355.6,78.9L356.5,80.3M342.4,83.4L343.1,83.0L343.5,82.4L345.7,82.4L349.3,81.8L352.1,81.8M349.3,81.8L348.1,84.8L345.5,86.5M345.5,86.5L342.4,87.6M342.4,85.0L343.1,85.5L342.2,86.6L341.5,86.9M345.5,86.5L345.9,88.0L343.5,88.8L344.6,90.0L344.1,90.6L342.4,91.6L341.3,91.2M342.0,87.4L341.9,88.8L341.3,91.2M352.1,81.8L353.4,83.9L352.8,85.8L353.6,87.0L355.3,88.2L355.6,90.0L356.1,90.6M345.9,88.0L349.0,89.4L352.0,91.6L353.9,91.7L355.0,90.6L355.6,90.6M353.9,91.7L355.0,92.4L356.0,92.4M349.9,106.3L350.3,105.2L351.2,105.2L354.5,105.7L356.7,103.9L359.9,103.4M359.9,103.4L363.2,102.3L364.0,100.0L363.4,99.2M363.4,99.2L360.6,99.0L359.5,97.3M359.9,103.4L361.1,106.0M363.4,99.2L364.1,97.7L364.6,95.8M358.6,96.9L359.1,97.0M362.0,81.7L364.3,80.8L366.5,81.3L370.0,82.5L369.8,84.5L369.2,86.1L369.6,88.8L370.7,89.4L369.7,90.9L372.0,93.9L370.4,96.3M360.5,75.9L362.1,75.2L364.3,76.5M364.3,76.5L365.4,76.5L367.2,74.6L368.7,75.4L370.8,76.8L373.1,79.6L375.8,81.5M370.0,82.5L372.0,83.5L373.6,82.9L375.8,81.5M356.9,69.9L356.1,68.2L354.5,67.5L353.9,66.8L354.5,65.7L354.3,64.8L356.0,64.7L356.4,63.8L358.6,62.2L361.6,62.8L363.2,63.7L365.4,63.2L367.6,63.7L370.3,63.2L368.7,61.8L369.8,60.3L369.8,58.8L372.0,58.5L374.2,58.1L378.0,56.9L380.7,57.0L380.7,58.5L383.5,58.8L386.7,58.4L387.3,59.9L390.6,63.5L393.8,63.2L396.0,64.7L398.5,65.8M398.5,65.8L396.8,67.1L396.6,68.9L393.8,68.6L393.1,70.9L390.6,71.6L391.1,74.3L390.8,75.4M364.3,76.5L364.3,71.6L367.0,70.9L369.8,72.6L371.4,73.6L374.0,73.4L375.3,75.0L375.9,76.7L377.4,76.9L378.5,76.4L380.7,75.2L383.5,75.0L384.0,74.0L386.2,74.4L389.5,74.6L390.8,75.4M390.8,75.4L388.4,76.9L386.2,77.7L384.0,78.2L383.7,78.9M383.7,78.9L385.1,81.5M375.8,81.5L377.4,82.0L379.1,81.4L380.7,80.3L381.4,82.4L383.5,81.7L385.0,81.8M377.2,81.8L377.4,79.5L378.9,77.3L380.7,78.0L382.9,77.2L380.7,75.2M378.9,77.3L380.2,78.7L383.7,78.9M369.7,90.9L371.4,91.3L375.6,90.7L376.0,89.2L378.9,88.3L379.1,86.4L380.7,85.8L381.3,83.3L385.0,81.8M377.7,98.0L380.7,97.1L379.6,94.8L380.1,93.0L382.9,90.6L384.5,89.4L384.5,87.2L384.0,84.9L387.3,83.9L388.2,83.9M385.0,81.8L386.2,83.3L388.2,83.9M388.2,83.9L389.1,85.8L389.5,87.6L388.9,89.1L391.7,90.4M391.7,90.4L393.8,91.5L397.1,93.0L399.4,93.1M391.7,90.4L390.7,92.1L392.8,93.2L394.9,93.7L396.9,94.7L399.4,94.9L399.4,93.1M399.4,93.1L400.2,93.8L400.4,94.4L403.7,94.4L403.7,93.2L401.5,92.8L400.2,93.8M403.7,93.2L405.9,91.8L408.1,91.3L409.5,92.8M399.4,94.9L400.3,96.3L399.5,97.1L400.4,100.0M400.3,95.1L401.3,96.2L404.1,96.5L402.9,98.3L404.0,98.8L404.0,101.1M409.5,92.8L407.2,95.4L406.5,97.1L405.1,97.7L405.1,99.6L404.3,100.8M409.5,92.8L411.0,93.6L410.9,95.6L409.8,97.7L411.3,98.8L411.9,100.0L413.8,100.9M413.8,100.9L412.5,101.9L410.3,102.6L409.7,104.0L410.8,106.2L410.5,107.9L411.6,110.1L411.9,111.8L410.9,113.5M412.5,101.9L413.0,102.8L413.9,102.8L413.5,104.9L414.6,104.5L416.8,104.2L417.7,105.3L417.7,106.8L418.6,108.5L418.1,108.7L415.7,108.8L415.1,109.6L415.6,111.6M418.1,108.7L420.6,108.4M414.8,99.5L415.7,101.2L417.4,101.7L416.8,102.8L418.1,104.0L419.5,105.7L420.6,107.4L420.6,108.4M420.6,108.4L420.8,110.9L419.0,111.8L418.8,112.4L417.4,113.0M413.8,100.9L414.8,99.5L416.6,99.3L418.2,98.5L419.8,99.1L420.1,100.2L421.2,100.6M412.5,117.4L413.5,118.1L414.7,117.7M422.9,122.3L423.9,123.5L425.6,122.9L427.4,123.0L428.6,122.3L429.4,121.2L429.6,119.7L431.6,119.8M457.3,127.3L457.3,134.4M438.8,134.8L439.8,134.5L439.9,134.9M398.5,65.8L399.1,65.8L401.5,64.2L403.7,63.7L407.0,64.7L410.3,64.0L410.6,61.8L414.6,62.8L415.0,64.0L419.0,64.2L421.7,65.7L425.6,65.4L428.3,64.4L430.7,65.0M399.1,65.8L401.5,67.8L402.6,70.9L407.5,72.7L408.6,74.7L413.5,74.8L417.9,76.1L422.8,75.0L425.3,73.4L425.6,71.6L429.4,70.9L430.5,69.6L434.1,69.3L432.1,67.5L429.9,67.5L430.7,65.0M430.7,65.0L431.9,65.4L433.8,64.2L434.3,61.1L435.4,59.9L438.1,59.6L440.9,60.6L442.5,64.2L443.1,65.2L445.8,66.4L446.3,67.9L448.5,67.4L450.4,67.1L449.6,68.6L448.5,71.6L446.6,71.9L446.3,74.3L445.9,75.1M445.9,75.1L443.4,76.0L441.8,76.0L439.0,78.2M441.0,81.0L443.5,80.0" fill="none" stroke="#a9afb6" stroke-width="0.6" stroke-linejoin="round"/><path d="M333.7,76.3L334.8,76.7L337.5,76.7L339.7,75.6L341.3,75.6L343.0,76.5L345.2,76.9L346.8,76.9L348.5,76.3L348.5,75.0L346.8,73.6L345.2,72.6L343.5,71.6L343.0,71.2L341.3,71.9L339.9,72.4L338.6,71.2L339.7,70.3L338.1,69.6L336.8,69.6L335.5,70.9L334.5,72.3L333.7,73.9L333.4,75.0ZM341.3,70.9L343.0,71.1L344.6,70.3L346.0,68.6L344.1,68.9L341.9,69.6ZM356.7,69.6L359.4,68.9L361.0,69.6L361.0,71.6L358.8,72.3L358.1,73.0L359.4,74.3L360.7,75.6L361.6,76.9L361.0,78.9L362.1,80.8L361.9,82.0L359.9,82.4L358.3,82.0L356.7,81.2L356.7,80.1L357.2,77.8L356.1,75.9L355.0,74.3L354.5,72.3L355.0,70.7ZM202.4,69.2L205.7,67.5L209.0,66.8L210.3,68.9L210.6,69.6L207.9,69.6L205.2,69.2ZM207.0,76.0L208.5,75.9L208.8,73.6L210.1,70.9L210.6,70.3L212.8,70.5L215.6,72.0L213.9,74.0L212.8,74.3L211.7,73.0L211.7,70.9L210.1,70.4L209.0,71.6L207.9,70.9L206.8,72.3L207.1,74.3ZM211.8,76.0L214.5,76.0L216.7,74.6L215.0,74.7L212.8,75.4ZM215.8,73.9L218.8,73.9L219.7,73.0L217.7,73.0ZM337.8,124.1L340.0,124.1L340.5,125.5L339.7,127.2L338.1,127.2L337.8,125.5Z" fill="#3f79b4"/><circle cx="186.2" cy="55.7" r="3.15" fill="#b50f1c"/><circle cx="198.0" cy="82.0" r="3.15" fill="#b50f1c"/><circle cx="294.0" cy="59.5" r="3.15" fill="#b50f1c"/><circle cx="299.2" cy="56.5" r="3.15" fill="#b50f1c"/><circle cx="305.5" cy="70.0" r="3.15" fill="#b50f1c"/><circle cx="314.2" cy="63.0" r="3.15" fill="#b50f1c"/><circle cx="303.2" cy="124.5" r="3.15" fill="#b50f1c"/><circle cx="379.2" cy="90.2" r="3.15" fill="#b50f1c"/><circle cx="389.7" cy="101.5" r="3.15" fill="#b50f1c"/><circle cx="413.7" cy="106.7" r="3.15" fill="#b50f1c"/><circle cx="233.0" cy="169.0" r="3.15" fill="#b50f1c"/></svg>
      <div class="zb" style="top:6px"><svg style="left:2.1px;top:1.9px" width="4.4" height="4.4" viewBox="0 0 8 8"><path d="M4,0.6 V7.4 M0.6,4 H7.4" stroke="#fff" stroke-width="1.7"/></svg></div>
      <div class="zb" style="top:16.8px"><svg style="left:2.1px;top:1.9px" width="4.4" height="4.4" viewBox="0 0 8 8"><path d="M0.6,4 H7.4" stroke="#fff" stroke-width="1.7"/></svg></div>
    </div>
  </div>
</div></div></div>
</body>
</html>
